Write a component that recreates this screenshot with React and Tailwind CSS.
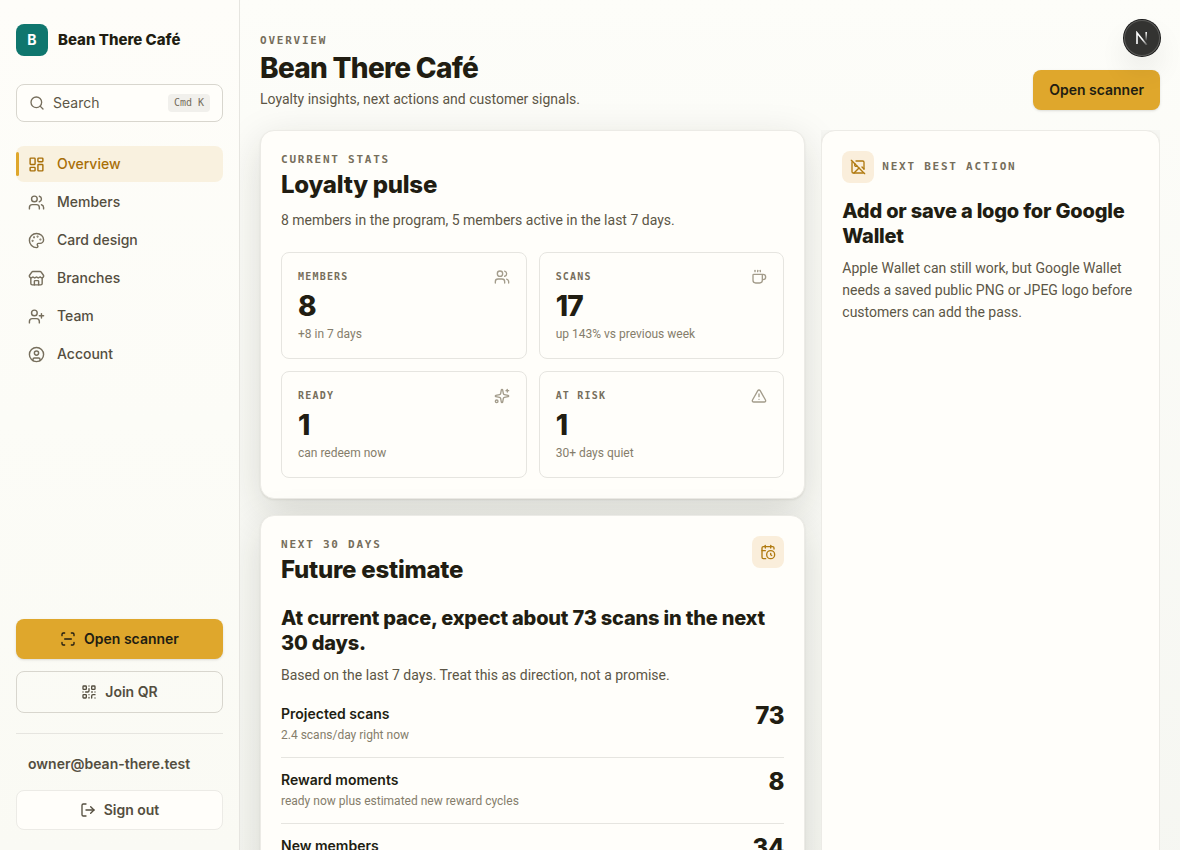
import React from 'react'
import {
  CalendarClock,
  CircleUser,
  Coffee,
  ImageOff,
  LayoutDashboard,
  LogOut,
  Palette,
  QrCode,
  ScanLine,
  Search,
  Sparkles,
  Store,
  TriangleAlert,
  UserPlus,
  Users
} from 'lucide-react'

const navItems = [
  { id: 'overview', icon: LayoutDashboard, label: 'Overview' },
  { id: 'members', icon: Users, label: 'Members' },
  { id: 'design', icon: Palette, label: 'Card design' },
  { id: 'branches', icon: Store, label: 'Branches' },
  { id: 'team', icon: UserPlus, label: 'Team' },
  { id: 'account', icon: CircleUser, label: 'Account' }
]

const stats = [
  { label: 'Members', value: '8', hint: '+8 in 7 days', icon: Users },
  { label: 'Scans', value: '17', hint: 'up 143% vs previous week', icon: Coffee },
  { label: 'Ready', value: '1', hint: 'can redeem now', icon: Sparkles },
  { label: 'At risk', value: '1', hint: '30+ days quiet', icon: TriangleAlert }
]

const estimates = [
  { label: 'Projected scans', value: '73', hint: '2.4 scans/day right now' },
  { label: 'Reward moments', value: '8', hint: 'ready now plus estimated new reward cycles' },
  { label: 'New members', value: '34', hint: 'based on recent joins' }
]

const Eyebrow = ({ children }) => (
  <p className="font-['DejaVu_Sans_Mono',monospace] text-[11px] leading-[18px] font-bold tracking-[0.16em] text-[#766e5c] uppercase">
    {children}
  </p>
)

const IconBadge = ({ icon: Icon }) => (
  <span className="flex size-8 shrink-0 items-center justify-center rounded-lg bg-[#faeedb] text-[#b07a10]">
    <Icon size={16} />
  </span>
)

const Sidebar = () => (
  <aside className="sticky top-0 z-10 flex h-screen w-60 shrink-0 flex-col border-r border-[#e6e5e0] bg-linear-to-b from-[#fefdf9] via-[#fcfcf7] to-[#fafaf4] px-4 pt-6 pb-5">
    <div className="flex items-center gap-2.5">
      <span className="flex size-8 items-center justify-center rounded-lg bg-[#0f766e] text-sm font-bold text-white">B</span>
      <span className="text-[15px] font-extrabold text-[#211d12]">Bean There Café</span>
    </div>

    <button className="mt-7 flex h-[38px] shrink-0 items-center gap-2 rounded-lg border border-[#d8d6ce] bg-[#fffefa] px-3 text-sm text-[#5c5646]">
      <Search size={16} className="text-[#766e5c]" />
      Search
      <kbd className="ml-auto rounded bg-[#f1f0ec] px-1.5 font-['DejaVu_Sans_Mono',monospace] text-[10px] leading-[18px] text-[#766e5c]">
        Cmd K
      </kbd>
    </button>

    <nav className="mt-6 flex flex-col gap-0.5">
      {navItems.map(({ id, icon: Icon, label }) => {
        const active = id === 'overview'
        return (
          <a
            key={id}
            href={`#${id}`}
            className={`relative flex h-9 items-center gap-3 rounded-lg px-3 text-sm font-medium ${
              active ? 'bg-[#f9f1df] text-[#a86f08]' : 'text-[#544e3f]'
            }`}
          >
            {active && <span className="absolute inset-y-1.5 left-0 w-[3px] rounded-full bg-[#dfa72c]" />}
            <Icon size={17} className={active ? '' : 'text-[#766e5c]'} />
            {label}
          </a>
        )
      })}
    </nav>

    <div className="mt-auto flex flex-col">
      <button className="flex h-10 items-center justify-center gap-2 rounded-lg bg-[#dfa72c] text-sm font-semibold text-[#211d12] shadow-sm">
        <ScanLine size={16} />
        Open scanner
      </button>
      <button className="mt-3 flex h-[42px] items-center justify-center gap-2 rounded-lg border border-[#d8d6ce] text-sm font-semibold text-[#544e3f]">
        <QrCode size={16} />
        Join QR
      </button>
      <div className="mt-5 border-t border-[#e6e5e0] pt-5">
        <p className="px-3 text-sm font-semibold text-[#544e3f]">owner@bean-there.test</p>
        <button className="mt-4 flex h-10 w-full items-center justify-center gap-2 rounded-lg border border-[#ecebe6] bg-[#fffefa] text-sm font-semibold text-[#544e3f]">
          <LogOut size={16} />
          Sign out
        </button>
      </div>
    </div>
  </aside>
)

const StatCard = ({ label, value, hint, icon: Icon }) => (
  <div className="rounded-lg border border-[#e6e5e0] p-4">
    <div className="flex h-4 items-center justify-between">
      <span className="font-['DejaVu_Sans_Mono',monospace] text-[10px] leading-4 font-bold tracking-[0.12em] text-[#766e5c] uppercase">
        {label}
      </span>
      <Icon size={16} className="text-[#a39c8b]" />
    </div>
    <p className="mt-1.5 text-[28px] leading-[30px] font-extrabold tracking-tight text-[#211d12]">{value}</p>
    <p className="mt-[5px] font-['Roboto',sans-serif] text-xs leading-4 text-[#857d6b]">{hint}</p>
  </div>
)

const DevBadge = () => (
  <button
    aria-label="Open dev tools"
    className="fixed top-5 right-5 z-20 flex size-9 items-center justify-center rounded-full bg-[#333331] shadow-[0_0_0_1px_#171717,inset_0_0_0_1px_#5a5a58,0_16px_32px_-8px_rgba(0,0,0,0.24)]"
  >
    <svg width="14" height="14" viewBox="0 0 14 14" fill="none">
      <defs>
        <linearGradient id="diag" x1="8" y1="8" x2="13" y2="15" gradientUnits="userSpaceOnUse">
          <stop stopColor="#fff" />
          <stop offset="1" stopColor="#fff" stopOpacity="0" />
        </linearGradient>
        <linearGradient id="stem" x1="11" y1="1" x2="11" y2="10" gradientUnits="userSpaceOnUse">
          <stop stopColor="#fff" />
          <stop offset="1" stopColor="#fff" stopOpacity="0" />
        </linearGradient>
      </defs>
      <path d="M2 13V1.8L11.8 14" stroke="url(#diag)" strokeWidth="1.6" />
      <path d="M11.2 1v11" stroke="url(#stem)" strokeWidth="1.6" />
    </svg>
  </button>
)

const panel = 'rounded-[14px] border border-[#ecebe6] bg-[#fffefa] p-5'
const panelShadow = 'shadow-[0_1px_2px_rgba(33,29,18,0.08),0_12px_40px_rgba(33,32,22,0.15)]'
const bodyText = "font-['Roboto',sans-serif] text-sm leading-[22px] text-[#5c5646]"

const App = () => {
  return (
    <div className="flex min-h-screen bg-linear-to-b from-[#fdfdf9] to-[#f5f6f1] font-['Inter',sans-serif] text-[#211d12]">
      <Sidebar />

      <main className="min-w-0 flex-1 px-5 pt-8 pb-5">
        <header className="mb-5 flex items-end justify-between gap-4">
          <div>
            <Eyebrow>Overview</Eyebrow>
            <h1 className="mt-0.5 text-[28px] leading-8 font-extrabold tracking-tight">Bean There Café</h1>
            <p className={`mt-1 ${bodyText}`}>Loyalty insights, next actions and customer signals.</p>
          </div>
          <button className="h-10 rounded-lg bg-[#dfa72c] px-4 text-sm font-semibold shadow-sm">Open scanner</button>
        </header>

        <div className="grid grid-cols-[minmax(0,1.61fr)_minmax(0,1fr)] gap-4">
          <div className="flex flex-col gap-4">
            <section className={`${panel} ${panelShadow}`}>
              <Eyebrow>Current stats</Eyebrow>
              <h2 className="mt-0.5 text-2xl leading-7 font-extrabold tracking-[-0.01em]">Loyalty pulse</h2>
              <p className={`mt-2.5 ${bodyText}`}>
                8 members in the program, 5 members active in the last 7 days.
              </p>
              <div className="mt-[21px] grid grid-cols-2 gap-3">
                {stats.map((stat) => (
                  <StatCard key={stat.label} {...stat} />
                ))}
              </div>
            </section>

            <section className={`${panel} ${panelShadow}`}>
              <div className="flex items-start justify-between">
                <div>
                  <Eyebrow>Next 30 days</Eyebrow>
                  <h2 className="mt-0.5 text-2xl leading-7 font-extrabold tracking-[-0.01em]">Future estimate</h2>
                </div>
                <IconBadge icon={CalendarClock} />
              </div>
              <h3 className="mt-[22px] text-xl leading-[25px] font-extrabold tracking-[-0.01em]">
                At current pace, expect about 73 scans in the next 30 days.
              </h3>
              <p className={`mt-2 ${bodyText}`}>
                Based on the last 7 days. Treat this as direction, not a promise.
              </p>
              <dl className="mt-1.5 divide-y divide-[#e6e5e0]">
                {estimates.map(({ label, value, hint }) => (
                  <div key={label} className="flex items-start justify-between py-3">
                    <dt>
                      <p className="text-sm leading-[19px] font-semibold">{label}</p>
                      <p className="mt-0.5 font-['Roboto',sans-serif] text-xs leading-5 text-[#857d6b]">{hint}</p>
                    </dt>
                    <dd className="text-2xl leading-[23px] font-extrabold tracking-[-0.01em]">{value}</dd>
                  </div>
                ))}
              </dl>
            </section>
          </div>

          {/* the wrapper cuts the panel's shadow off at its own edge */}
          <div className="relative flex overflow-hidden">
            <section className={`${panel} ${panelShadow} flex-1`}>
              <div className="flex items-center gap-2">
                <IconBadge icon={ImageOff} />
                <Eyebrow>Next best action</Eyebrow>
              </div>
              <h3 className="mt-4 text-xl leading-[25px] font-extrabold tracking-[-0.01em]">
                Add or save a logo for Google Wallet
              </h3>
              <p className={`mt-2 ${bodyText}`}>
                Apple Wallet can still work, but Google Wallet needs a saved public PNG or JPEG logo before customers can
                add the pass.
              </p>
            </section>
          </div>
        </div>
      </main>

      <DevBadge />
    </div>
  )
}

export default App
